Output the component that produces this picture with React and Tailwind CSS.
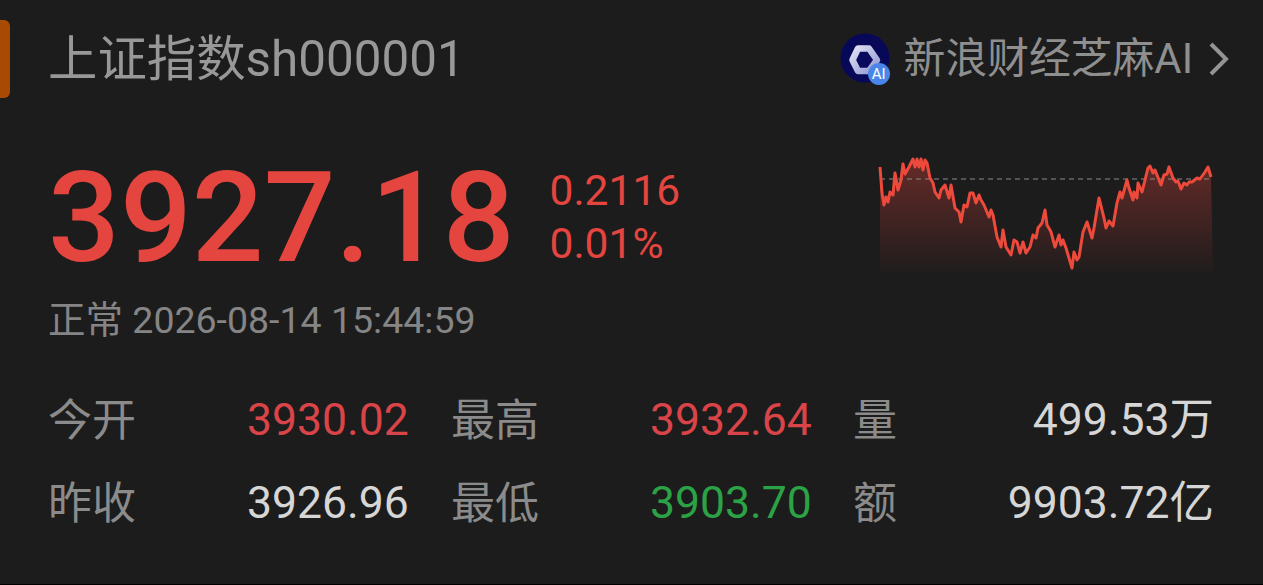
import React from 'react';

const FONT = "font-['Roboto','Noto_Sans_CJK_SC',sans-serif]";

// price line, in chart coordinates (0..340 x 0..130)
const LINE = [
  [10,17],[12,43],[14,55],[16,47],[18,52],[20,42],[23,45],[25,23],[28,40],[31,30],[33,14],[35,24],[39,17],[43,9],[45,17],[47,9],[49,17],[51,9],[53,20],[55,10],[57,13],[60,28],[63,33],[65,42],[69,48],[71,40],[75,35],[79,48],[81,35],[85,58],[89,62],[91,72],[94,55],[97,57],[100,43],[103,43],[106,53],[109,45],[111,50],[114,55],[119,67],[121,60],[123,65],[127,87],[131,97],[133,80],[136,97],[141,105],[144,90],[147,92],[150,103],[153,92],[156,103],[160,97],[163,85],[166,88],[168,78],[172,73],[175,60],[177,75],[180,80],
  [181,82],[185,97],[189,85],[191,95],[193,90],[196,98],[202,118],[204,102],[207,110],[209,107],[213,82],[217,72],[222,88],[224,78],[229,48],[234,68],[236,78],[239,71],[243,76],[247,53],[250,42],[252,48],[257,30],[259,38],[263,50],[264,42],[267,48],[268,33],[272,42],[278,18],[280,16],[283,23],[285,20],[291,35],[294,25],[297,24],[299,17],[303,28],[306,32],[308,31],[311,39],[314,33],[317,35],[319,32],[322,32],[327,28],[330,29],[335,22],[338,17],[341,27],
];

const linePath = LINE.map((p, i) => `${i === 0 ? 'M' : 'L'}${p[0]} ${p[1]}`).join(' ');

const Sparkline = () => (
  <svg width="345" height="125" viewBox="0 0 345 125" className="shrink-0">
    <defs>
      <linearGradient id="areaFill" x1="0" y1="0" x2="0" y2="1">
        <stop offset="0" stopColor="#e8453c" stopOpacity="0.36" />
        <stop offset="1" stopColor="#e8453c" stopOpacity="0.02" />
      </linearGradient>
    </defs>
    <path d={`${linePath} L343 122 L10 122 Z`} fill="url(#areaFill)" />
    <line x1="10" y1="29" x2="341" y2="29" stroke="#8a8a8a" strokeWidth="1" strokeDasharray="5 4" />
    <path d={linePath} fill="none" stroke="#ee4a3c" strokeWidth="3" strokeLinejoin="round" />
  </svg>
);

const AiLogo = () => (
  <div className="relative w-[50px] h-[52px] shrink-0">
    <svg width="50" height="50" viewBox="0 0 50 50">
      <defs>
        <linearGradient id="ringFill" x1="0" y1="0" x2="1" y2="1">
          <stop offset="0" stopColor="#dfe1f3" />
          <stop offset="1" stopColor="#9298d2" />
        </linearGradient>
      </defs>
      <circle cx="25" cy="25" r="24.5" fill="#080858" />
      <path d="M18 15.5 H29 L37 27 L29 38 H18 L12.5 27 Z" fill="#0a0a5c" stroke="url(#ringFill)" strokeWidth="6.5" strokeLinejoin="round" />
    </svg>
    <div className="absolute right-0 bottom-0 w-[22px] h-[22px] rounded-full bg-[#4a86ea] text-white text-[15px] leading-[22px] text-center font-['Roboto',sans-serif]">
      AI
    </div>
  </div>
);

const RED = 'text-[#e5453f]';
const STAT_RED = 'text-[#d94448]';
const WHITE = 'text-[#d6d6d6]';
const GREEN = 'text-[#2ba245]';

const STATS = [
  { label: '今开', value: '3930.02', color: STAT_RED },
  { label: '最高', value: '3932.64', color: STAT_RED },
  { label: '量', value: '499.53万', color: WHITE, right: true },
  { label: '昨收', value: '3926.96', color: WHITE },
  { label: '最低', value: '3903.70', color: GREEN },
  { label: '额', value: '9903.72亿', color: WHITE, right: true },
];

const App = () => {
  return (
    <div className={`w-full h-[585px] overflow-hidden bg-[#1c1c1c] border-b border-black ${FONT}`}>
      <div className="flex items-center h-[78px] mt-[20px]">
        <div className="w-[10px] h-[78px] rounded-r-[6px] bg-[#a84a04]" />
        <div className="ml-[38px] text-[49.4px] leading-[78px] text-[#989898]">上证指数sh000001</div>
        <div className="ml-auto mr-[33px] flex items-center">
          <AiLogo />
          <span className="ml-[14px] text-[41.8px] leading-[78px] text-[#8f8f8f]">新浪财经芝麻AI</span>
          <svg width="22" height="36" viewBox="0 0 22 36" className="ml-[15px]">
            <path d="M3 3 L18 18 L3 33" fill="none" stroke="#949494" strokeWidth="4" />
          </svg>
        </div>
      </div>

      <div className="flex items-start mt-[50px] pl-[48px] pr-[48px]">
        <div className={`text-[126.5px] font-medium leading-[140px] h-[140px] ${RED}`}>3927.18</div>
        <div className={`ml-[35px] mt-[16px] text-[42.5px] leading-[53px] ${RED}`}>
          <div>0.2116</div>
          <div>0.01%</div>
        </div>
        <div className="ml-auto mt-[2px]">
          <Sparkline />
        </div>
      </div>

      <div className="mt-[7px] pl-[48px] text-[37.5px] leading-[50px] text-[#858585]">正常 2026-08-14 15:44:59</div>

      <div className="grid grid-cols-[403px_402px_361px] auto-rows-[83px] mt-[34px] pl-[48px]">
        {STATS.map((s) => (
          <div key={s.label} className={`flex items-center ${s.right ? 'justify-between' : ''}`}>
            <span className={`text-[44px] text-[#8b8b8b] ${s.right ? '' : 'w-[199px]'}`}>{s.label}</span>
            <span className={`text-[44.5px] ${s.color}`}>{s.value}</span>
          </div>
        ))}
      </div>
    </div>
  );
};

export default App;
